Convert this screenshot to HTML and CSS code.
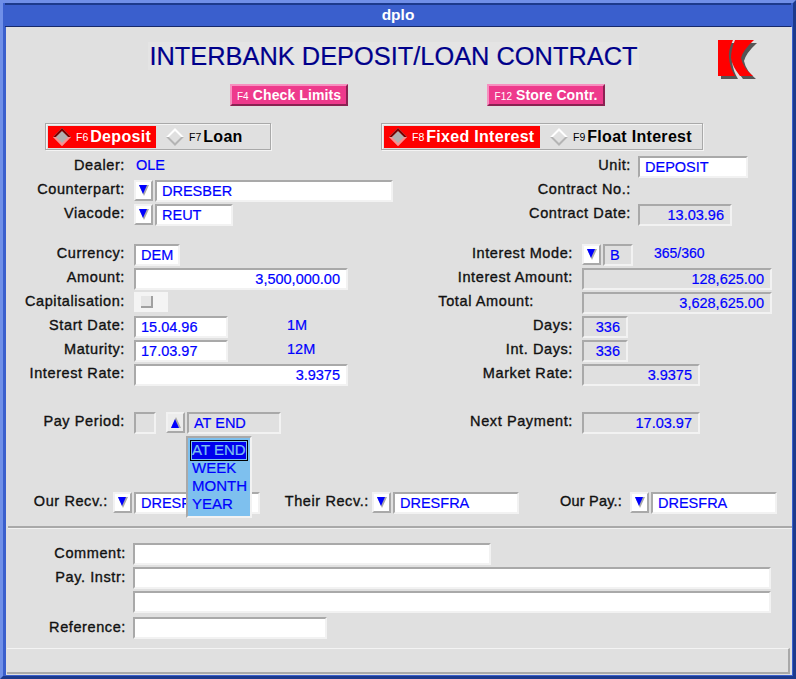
FILE: index.html
```html
<!DOCTYPE html>
<html>
<head>
  <title>dplo</title>
  <link rel="stylesheet" href="styles.css">
</head>
<body>
  <div class="window">
    <div class="titlebar">dplo</div>
    <div class="form">

      <div class="head">
        <h1>INTERBANK DEPOSIT/LOAN CONTRACT</h1>
        <svg class="logo" width="40" height="40" viewBox="0 0 40 40">
          <path fill="#555" d="M3 3H18Q13 13 14 21Q15 31 20 39H3Z M20 3H39Q28 13 26 21Q28 31 38 39H25Q17 29 16 21Q16 13 20 3Z"/>
          <path fill="#f00" d="M0 0H15Q10 10 11 18Q12 28 17 36H0Z M17 0H36Q25 10 23 18Q25 28 35 36H22Q14 26 13 18Q13 10 17 0Z"/>
        </svg>
      </div>

      <div class="actions">
        <button class="action action-left"><span class="key">F4</span>Check Limits</button>
        <button class="action action-right"><span class="key">F12</span>Store Contr.</button>
      </div>

      <div class="toggles">
        <div class="radio-box box-type">
          <div class="radio on on-deposit">
            <svg class="diamond" width="20" height="20" viewBox="0 0 18 18"><path fill="#b0b0b0" d="M9 1L17 9L9 17L1 9Z"/><path fill="#ff8c8c" d="M17 9L9 17L1 9L3.5 9L9 14.5L14.5 9Z"/><path fill="#7a0000" d="M1 9L9 1L17 9L14.5 9L9 3.5L3.5 9Z"/></svg>
            <span class="key">F6</span>Deposit
          </div>
          <div class="radio">
            <svg class="diamond" width="20" height="20" viewBox="0 0 18 18"><path fill="#b4b4b4" d="M17 9L9 17L1 9L3.5 9L9 14.5L14.5 9Z"/><path fill="#fff" d="M1 9L9 1L17 9L14.5 9L9 3.5L3.5 9Z"/></svg>
            <span class="key">F7</span>Loan
          </div>
        </div>
        <div class="radio-box box-interest">
          <div class="radio on on-fixed">
            <svg class="diamond" width="20" height="20" viewBox="0 0 18 18"><path fill="#b0b0b0" d="M9 1L17 9L9 17L1 9Z"/><path fill="#ff8c8c" d="M17 9L9 17L1 9L3.5 9L9 14.5L14.5 9Z"/><path fill="#7a0000" d="M1 9L9 1L17 9L14.5 9L9 3.5L3.5 9Z"/></svg>
            <span class="key">F8</span>Fixed Interest
          </div>
          <div class="radio">
            <svg class="diamond" width="20" height="20" viewBox="0 0 18 18"><path fill="#b4b4b4" d="M17 9L9 17L1 9L3.5 9L9 14.5L14.5 9Z"/><path fill="#fff" d="M1 9L9 1L17 9L14.5 9L9 3.5L3.5 9Z"/></svg>
            <span class="key">F9</span>Float Interest
          </div>
        </div>
      </div>

      <div class="columns">
        <div class="col-left">
          <div class="row"><label>Dealer:</label><span class="value">OLE</span></div>
          <div class="row"><label>Counterpart:</label><span class="arrow down"></span><span class="field edit w238">DRESBER</span></div>
          <div class="row"><label>Viacode:</label><span class="arrow down"></span><span class="field edit w78">REUT</span></div>
        </div>
        <div class="col-right col-top">
          <div class="row"><label>Unit:</label><span class="field edit w110">DEPOSIT</span></div>
          <div class="row"><label>Contract No.:</label></div>
          <div class="row"><label>Contract Date:</label><span class="field num w94">13.03.96</span></div>
        </div>
      </div>

      <div class="columns block-mid">
        <div class="col-left">
          <div class="row"><label>Currency:</label><span class="field edit w46">DEM</span></div>
          <div class="row"><label>Amount:</label><span class="field edit num w214">3,500,000.00</span></div>
          <div class="row"><label>Capitalisation:</label><span class="check-cell"><span class="check"></span></span></div>
          <div class="row"><label>Start Date:</label><span class="field edit w94">15.04.96</span><span class="value tenor">1M</span></div>
          <div class="row"><label>Maturity:</label><span class="field edit w94">17.03.97</span><span class="value tenor">12M</span></div>
          <div class="row"><label>Interest Rate:</label><span class="field edit num w214">3.9375</span></div>
        </div>
        <div class="col-right">
          <div class="row"><label>Interest Mode:</label><span class="arrow down"></span><span class="field w30">B</span><span class="value basis">365/360</span></div>
          <div class="row"><label>Interest Amount:</label><span class="field num w190">128,625.00</span></div>
          <div class="row"><label class="label-short">Total Amount:</label><span class="field num w190">3,628,625.00</span></div>
          <div class="row"><label>Days:</label><span class="field num w46">336</span></div>
          <div class="row"><label>Int. Days:</label><span class="field num w46">336</span></div>
          <div class="row"><label>Market Rate:</label><span class="field num w118">3.9375</span></div>
        </div>
      </div>

      <div class="columns block-pay">
        <div class="col-left">
          <div class="row">
            <label>Pay Period:</label>
            <span class="field w22"></span>
            <span class="arrow up period-arrow"></span>
            <div class="period">
              <span class="field w94">AT END</span>
              <ul class="menu">
                <li class="selected">AT END</li>
                <li>WEEK</li>
                <li>MONTH</li>
                <li>YEAR</li>
              </ul>
            </div>
          </div>
        </div>
        <div class="col-right">
          <div class="row"><label>Next Payment:</label><span class="field num w118">17.03.97</span></div>
        </div>
      </div>

      <div class="accounts">
        <div class="account acc-our">
          <label>Our Recv.:</label><span class="arrow down"></span><span class="field edit w126">DRESFRA</span>
        </div>
        <div class="account acc-their">
          <label>Their Recv.:</label><span class="arrow down"></span><span class="field edit w126">DRESFRA</span>
        </div>
        <div class="account acc-pay">
          <label>Our Pay.:</label><span class="arrow down"></span><span class="field edit w126">DRESFRA</span>
        </div>
      </div>

      <div class="separator"></div>

      <div class="notes">
        <div class="row"><label>Comment:</label><span class="field edit w358"></span></div>
        <div class="row"><label>Pay. Instr:</label><span class="field edit w638"></span></div>
        <div class="row"><label></label><span class="field edit w638"></span></div>
        <div class="row row-last"><label>Reference:</label><span class="field edit w194"></span></div>
      </div>

      <div class="statusbar"></div>
    </div>
  </div>
</body>
</html>
```

FILE: styles.css
```css
* {
  box-sizing: border-box;
}

body {
  margin: 0;
  font-family: "Liberation Sans", Arial, sans-serif;
  font-size: 14.5px;
  background-color: #3a5fcd;
}

/* window frame: light outer bevel, dark inner one, flipped at bottom right */
.window {
  height: 679px;
  border: 3px solid;
  border-color: #6f8fe8 #1c3a8c #1c3a8c #6f8fe8;
  background-color: #3a5fcd;
  display: flex;
  flex-direction: column;
}

.titlebar {
  height: 24px;
  flex: none;
  margin: 0 2px;
  border-top: 2px solid #1c3a8c;
  border-bottom: 1px solid #16296b;
  line-height: 20px;
  text-align: center;
  color: #fff;
  font-size: 15.5px;
  font-weight: bold;
}

.form {
  flex: 1;
  margin: 0 1px 1px 3px;
  background-color: #e0e0e0;
  padding-top: 15px;
  display: flex;
  flex-direction: column;
}

/* heading */
.head {
  height: 42px;
  display: flex;
  position: relative;
  justify-content: center;
  padding-right: 11px;
}

h1 {
  margin: 0;
  height: 28px;
  padding: 0 1px;
  font-size: 25.4px;
  line-height: 28px;
  font-weight: normal;
  color: #00008b;
  background-color: #e4e4e4;
  -webkit-text-stroke: 0.2px #00008b;
}

.logo {
  position: absolute;
  left: 712px;
  top: -2px;
}

/* pink push buttons */
.actions {
  display: flex;
  height: 39px;
  padding-left: 224px;
}

.action {
  width: 118px;
  height: 22px;
  padding: 0;
  font-family: inherit;
  font-size: 14px;
  font-weight: bold;
  letter-spacing: 0.1px;
  color: #fff;
  background-color: #ee3a8c;
  border: 2px solid;
  border-color: #f78fbf #8b2252 #8b2252 #f78fbf;
}

.action-right {
  margin-left: 139px;
}

.action .key {
  font-size: 10px;
  font-weight: normal;
  margin-right: 4px;
}

/* radio boxes */
.toggles {
  display: flex;
  height: 33px;
  padding-left: 39px;
}

.radio-box {
  height: 27px;
  padding: 2px;
  display: flex;
  border: 1px solid #a9a9a9;
  box-shadow: 1px 1px 0 #f4f4f4, inset 1px 1px 0 #f4f4f4;
}

.box-type {
  width: 226px;
}

.box-interest {
  width: 322px;
  margin-left: 110px;
}

.radio {
  height: 22px;
  display: flex;
  align-items: center;
  font-size: 16px;
  font-weight: bold;
  letter-spacing: 0.3px;
  color: #000;
  padding-left: 9px;
}

.radio.on {
  background-color: #f00;
  color: #fff;
  padding-left: 4px;
}

.on-deposit {
  width: 108px;
}

.on-fixed {
  width: 156px;
}

.diamond {
  flex: none;
  margin-right: 4px;
}

.radio .key {
  font-size: 10.5px;
  font-weight: normal;
  letter-spacing: 0;
  margin-right: 2px;
}

/* form rows */
.columns {
  display: flex;
}

.block-mid {
  margin-top: 16px;
}

.block-pay {
  margin-top: 24px;
}

.col-left {
  width: 431px;
  flex: none;
}

.row {
  height: 24px;
  display: flex;
  align-items: flex-start;
}

label {
  flex: none;
  width: 119px;
  margin-right: 9px;
  height: 18px;
  line-height: 18px;
  text-align: right;
  white-space: nowrap;
  font-size: 14.5px;
  letter-spacing: 0.6px;
  color: #111;
  -webkit-text-stroke: 0.35px #111;
}

.col-right label {
  width: 136px;
}

.col-right .label-short {
  padding-right: 39px;
}

.col-top label {
  width: 194px;
  margin-right: 7px;
}

.value {
  line-height: 18px;
  color: #00f;
  padding-left: 2px;
  -webkit-text-stroke: 0.2px #00f;
}

.tenor {
  margin-left: 59px;
  padding-left: 0;
}

.basis {
  margin-left: 21px;
  padding-left: 0;
  font-size: 14px;
}

.field {
  flex: none;
  display: block;
  height: 22px;
  line-height: 18px;
  padding: 0 6px 0 5px;
  white-space: nowrap;
  color: #00f;
  background-color: #e0e0e0;
  border: 2px solid;
  border-color: #a9a9a9 #f2f2f2 #f2f2f2 #a9a9a9;
  -webkit-text-stroke: 0.2px #00f;
}

.edit {
  background-color: #fff;
}

.num {
  text-align: right;
}

.w22 { width: 22px; }
.w30 { width: 30px; }
.w46 { width: 46px; }
.w78 { width: 78px; }
.w94 { width: 94px; }
.w110 { width: 110px; }
.w118 { width: 118px; }
.w126 { width: 126px; }
.w190 { width: 190px; }
.w194 { width: 194px; }
.w214 { width: 214px; }
.w238 { width: 238px; }
.w358 { width: 358px; }
.w638 { width: 638px; }

/* arrow buttons: grey triangle with a narrower blue one on top */
.arrow {
  flex: none;
  width: 19px;
  height: 21px;
  margin-right: 2px;
  position: relative;
  background-color: #fff;
  border: 2px solid;
  border-color: #f2f2f2 #a9a9a9 #a9a9a9 #f2f2f2;
}

.arrow::before,
.arrow::after {
  content: "";
  position: absolute;
  width: 0;
  height: 0;
}

.arrow::after {
  left: 3px;
  border-left: 5px solid transparent;
  border-right: 5px solid transparent;
}

.arrow::before {
  z-index: 1;
  left: 3px;
  border-left: 4px solid transparent;
  border-right: 4px solid transparent;
}

.arrow.down::after {
  top: 3px;
  border-top: 11px solid #a9a9a9;
}

.arrow.down::before {
  top: 3px;
  border-top: 9px solid #00f;
}

.arrow.up {
  background-color: #ececec;
}

.arrow.up::after {
  top: 3px;
  border-bottom: 11px solid #a9a9a9;
}

.arrow.up::before {
  top: 5px;
  border-bottom: 9px solid #00f;
}

.period-arrow {
  margin-left: 10px;
}

.period {
  position: relative;
}

.check-cell {
  width: 34px;
  height: 20px;
  background-color: #f4f4f4;
  display: flex;
  align-items: center;
  padding-left: 7px;
}

.check {
  width: 12px;
  height: 12px;
  background-color: #e6e6e6;
  border: solid #a0a0a0;
  border-width: 0 2px 2px 0;
}

/* the open option menu lies over the row below it */
.menu {
  position: absolute;
  z-index: 2;
  left: -1px;
  top: 24px;
  width: 66px;
  height: 82px;
  margin: 0;
  padding: 3px;
  list-style: none;
  font-size: 15px;
  background-color: #7ec0ee;
  border: 2px solid;
  border-color: #a9a9a9 #f2f2f2 #f2f2f2 #a9a9a9;
  color: #00f;
  -webkit-text-stroke: 0.2px #00f;
}

.menu li {
  height: 18px;
  line-height: 18px;
  padding-left: 1px;
  white-space: nowrap;
}

.menu .selected {
  height: 19px;
  margin-bottom: -1px;
  color: #7ec0ee;
  background-color: #0000ee;
  outline: 1px solid #000;
  box-shadow: inset 0 0 0 1px #7ec0ee;
  -webkit-text-stroke: 0.2px #7ec0ee;
}

/* account row */
.accounts {
  margin-top: 56px;
  display: flex;
  height: 24px;
  align-items: flex-start;
}

.account {
  display: flex;
  align-items: flex-start;
}

.acc-our label {
  width: 102px;
  margin-right: 5px;
}

.acc-their label {
  width: 109px;
  margin-right: 3px;
}

.acc-pay label {
  width: 103px;
  margin-right: 8px;
  letter-spacing: 0.2px;
}

.separator {
  height: 3px;
  margin: 10px 0 0 2px;
  border-top: 2px solid #a9a9a9;
  border-bottom: 1px solid #f2f2f2;
}

.notes {
  margin-top: 14px;
}

.notes label {
  width: 120px;
  margin: 1px 7px 0 0;
}

.row-last {
  margin-top: 2px;
}

.statusbar {
  flex: 1;
  margin: 7px 2px 1px 1px;
  border-top: 1px solid #f4f4f4;
  border-right: 2px solid #a9a9a9;
  border-bottom: 2px solid #a9a9a9;
}
```
